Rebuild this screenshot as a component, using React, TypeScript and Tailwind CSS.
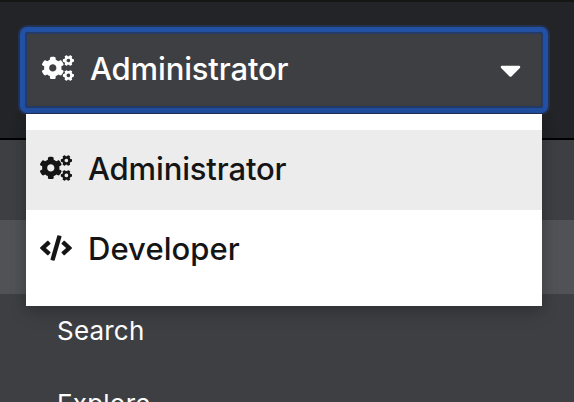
import { FaCogs, FaCode, FaCaretDown } from "react-icons/fa";

const items = [
  { label: "Administrator", Icon: FaCogs, active: true, spacing: "tracking-[-0.15px]" },
  { label: "Developer", Icon: FaCode, active: false, spacing: "tracking-[0.06px]" },
];

export default function App() {
  return (
    <div className="h-[402px] w-[574px] overflow-hidden bg-[#3e3f42] font-['Inter','Open_Sans',sans-serif]">
      <header className="h-[140px] border-t-2 border-b-2 border-t-[#151715] border-b-black bg-[#222427] pt-[23px] pl-[18px]">
        <div className="relative w-[532px]">
          <div className="rounded-[9px] bg-[#233252] p-[2px]">
            <div className="rounded-[7px] bg-[#2250a4] p-[5px]">
              <button className="flex h-[76px] w-full items-center rounded-[2px] border-2 border-[#243b69] bg-[#3e3f42] pr-5 pb-[3px] pl-[15px] text-white">
                <FaCogs className="mb-px h-[26px] w-8" />
                <span className="ml-4 text-[31px] leading-8 font-medium tracking-[-0.15px]">Administrator</span>
                <FaCaretDown className="mt-[3px] ml-auto h-[34px] w-[21px]" />
              </button>
            </div>
          </div>
          <ul className="absolute top-[89px] left-2 h-48 w-[516px] bg-white py-4 text-[#151515] shadow-[0_8px_16px_rgba(3,3,3,0.16),0_0_12px_rgba(3,3,3,0.12)]">
            {items.map(({ label, Icon, active, spacing }) => (
              <li key={label} className={`flex h-20 items-center pb-[3px] pl-[14px] ${active ? "bg-[#ececec]" : "bg-white"}`}>
                <Icon className="mb-[2px] h-[26px] w-8" />
                <span className={`ml-4 text-[31px] leading-8 font-medium ${spacing}`}>{label}</span>
              </li>
            ))}
          </ul>
        </div>
      </header>
      <nav className="text-[26px] tracking-[0.2px] text-white">
        <div className="h-20" />
        <div className="h-[74px] bg-[#505255]" />
        <div className="flex h-[73px] items-center pl-[57px]">Search</div>
        <div className="flex h-[73px] items-center pl-[57px]">Explore</div>
      </nav>
    </div>
  );
}
